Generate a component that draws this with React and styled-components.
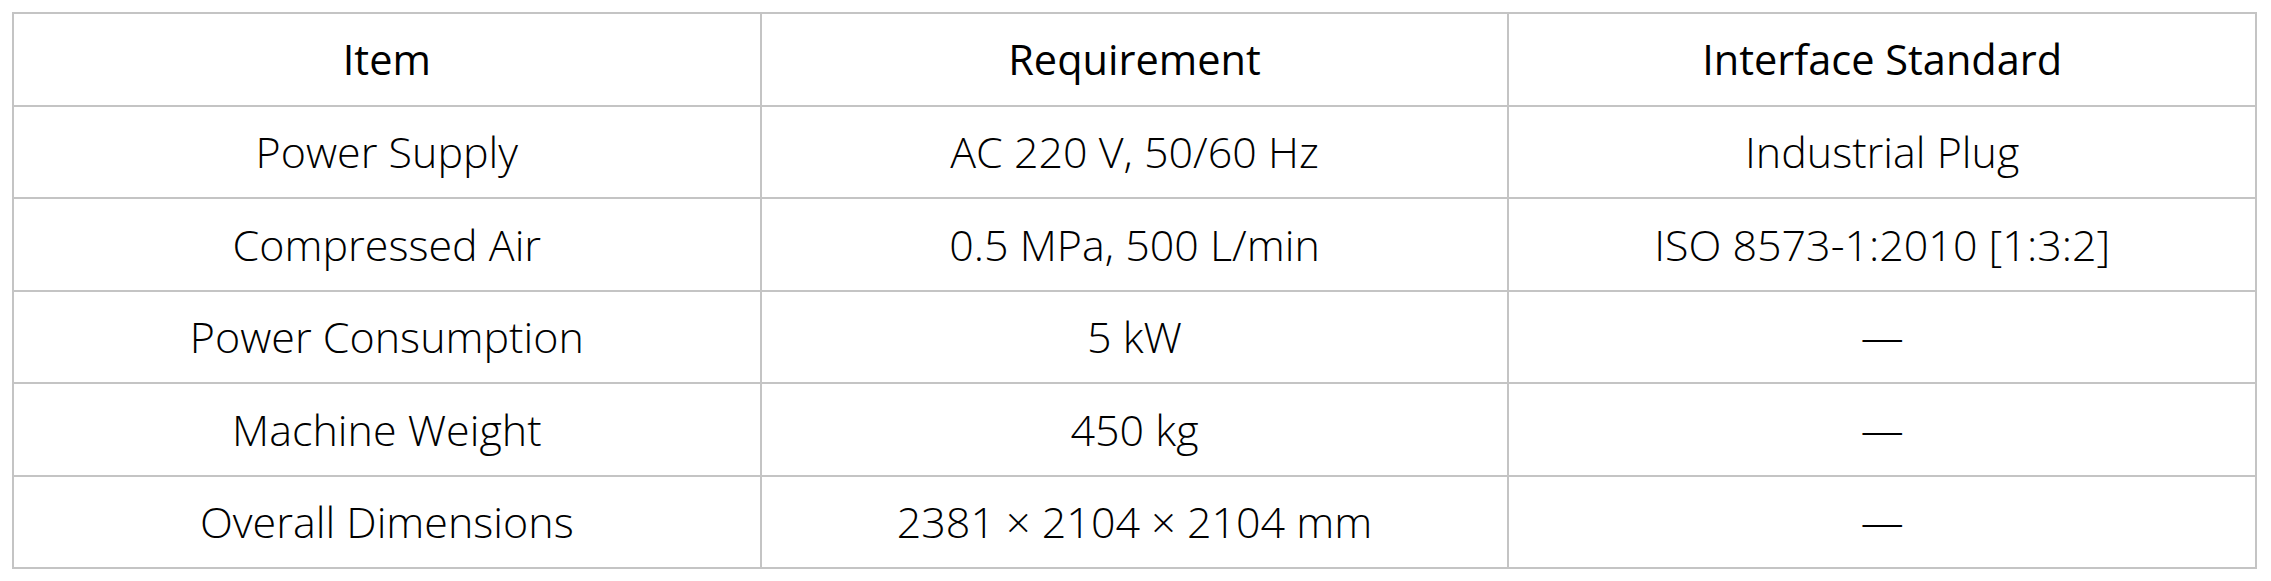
import React from 'react';
import styled, { createGlobalStyle } from 'styled-components';

const Global = createGlobalStyle`
  body {
    margin: 0;
    background: #fff;
  }
`;

const Page = styled.div`
  padding: 12px 0 0 12px;
`;

const Table = styled.div`
  width: 2245px;
  display: grid;
  grid-template-columns: repeat(3, 1fr);
  grid-auto-rows: 92.5px;
  border-top: 2px solid #c4c4c4;
  border-left: 2px solid #c4c4c4;
  box-sizing: border-box;
  font-family: "Open Sans", "Noto Sans", sans-serif;
  font-size: 43px;
  color: #000;
`;

const Cell = styled.div`
  display: flex;
  align-items: center;
  justify-content: center;
  border-right: 2px solid #c4c4c4;
  border-bottom: 2px solid #c4c4c4;
  font-size: ${(p) => (p.$head ? '41.5px' : '43px')};
  font-weight: ${(p) => (p.$head ? 400 : 300)};
  white-space: nowrap;
`;

const head = ['Item', 'Requirement', 'Interface Standard'];

const rows = [
  ['Power Supply', 'AC 220 V, 50/60 Hz', 'Industrial Plug'],
  ['Compressed Air', '0.5 MPa, 500 L/min', 'ISO 8573-1:2010 [1:3:2]'],
  ['Power Consumption', '5 kW', '—'],
  ['Machine Weight', '450 kg', '—'],
  ['Overall Dimensions', '2381 × 2104 × 2104 mm', '—'],
];

export default function App() {
  return (
    <>
      <Global />
      <Page>
        <Table>
          {head.map((h) => (
            <Cell key={h} $head>
              {h}
            </Cell>
          ))}
          {rows.map((r) =>
            r.map((c, i) => <Cell key={r[0] + i}>{c}</Cell>)
          )}
        </Table>
      </Page>
    </>
  );
}
